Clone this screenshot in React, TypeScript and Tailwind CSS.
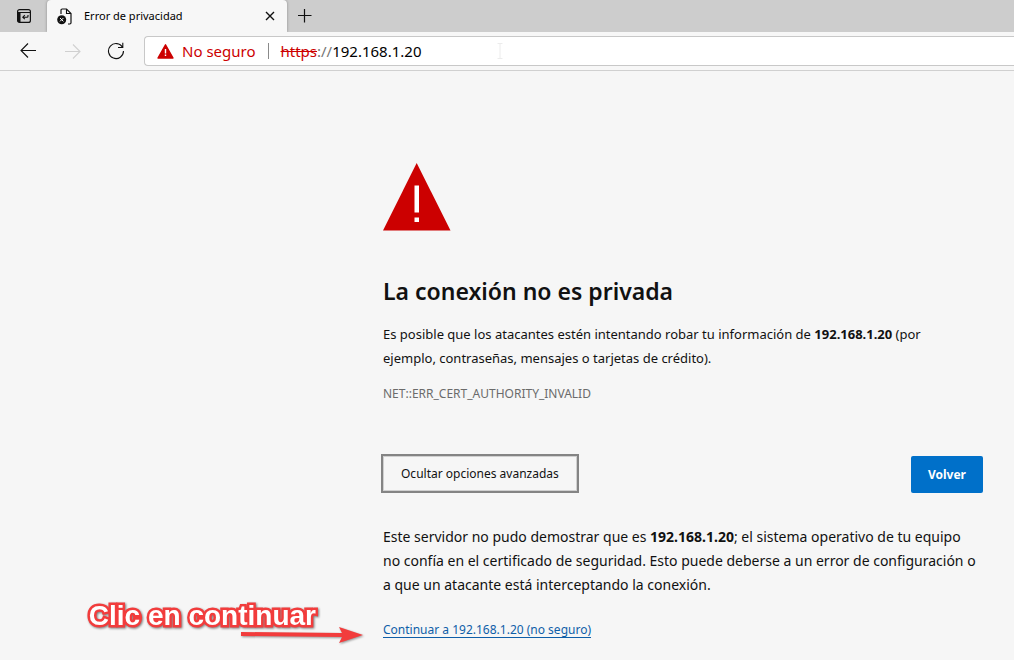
import React from "react";

const TabActionsIcon = () => (
    <svg width="16" height="16" viewBox="0 0 16 16" fill="none" aria-hidden="true">
        <rect x="1.6" y="1.6" width="12.8" height="12.8" rx="2" stroke="#111" strokeWidth="1.2" />
        <path d="M1.5 4.5h3v10h-1a2 2 0 0 1-2-2z" fill="#111" />
        <path d="M1.5 4.500h13" stroke="#111" strokeWidth="1" />
        <path d="M12 7v1.2a1 1 0 0 1-1 1H7M8.8 7.2l-2 2 2 2" stroke="#111" strokeWidth="1.1" />
    </svg>
);

const BrokenPageIcon = () => (
    <svg width="16" height="17" viewBox="0 0 16 17" fill="none" aria-hidden="true">
        <path d="M4 6V2.2A1.2 1.2 0 0 1 5.2 1h4.3L14 5.5v9.3a1.2 1.2 0 0 1-1.2 1.2H11" stroke="#111" strokeWidth="1.2" />
        <path d="M9.5 1v4.5H14" stroke="#111" strokeWidth="1.1" />
        <circle cx="4.7" cy="11.7" r="4.5" fill="#111" />
        <path d="M3 10l3.4 3.4M6.4 10L3 13.4" stroke="#fff" strokeWidth="1" />
    </svg>
);

const CloseIcon = () => (
    <svg width="10" height="10" viewBox="0 0 10 10" aria-hidden="true">
        <path d="M1 1l8 8M9 1L1 9" stroke="#111" strokeWidth="1.4" />
    </svg>
);

const PlusIcon = () => (
    <svg width="14" height="14" viewBox="0 0 14 14" aria-hidden="true">
        <path d="M6.5 0v13.5M0 6.5h13.5" stroke="#111" strokeWidth="1.2" />
    </svg>
);

const ArrowIcon = ({ className }: { className?: string }) => (
    <svg className={className} width="17" height="16" viewBox="0 0 17 16" fill="none" aria-hidden="true">
        <path d="M16 7.5H1M8 .5l-7 7 7 7" stroke="currentColor" strokeWidth="1.1" />
    </svg>
);

const ReloadIcon = () => (
    <svg width="18" height="18" viewBox="0 0 18 18" fill="none" aria-hidden="true">
        <path d="M15.6 5.5A7.5 7.5 0 1 0 16.5 9M15.8 .8v4.7H11" stroke="#111" strokeWidth="1.1" />
    </svg>
);

const AlertIcon = () => (
    <svg width="17" height="15" viewBox="0 0 17 15" aria-hidden="true">
        <path d="M8.5 .8L16 14H1z" fill="#c00" stroke="#c00" strokeWidth="1.4" strokeLinejoin="round" />
        <path d="M7.8 5h1.4v4.5H7.8zM7.8 10.6h1.4v1.5H7.8z" fill="#fff" />
    </svg>
);

const WarningTriangle = () => (
    <svg width="68" height="68" viewBox="0 0 68 68" role="img" aria-label="Advertencia">
        <path d="M33.7 0l33.8 67.5H0z" fill="#c00" />
        <path d="M31.5 22.5H36v27h-4.5zM31.5 54.5H36V59h-4.5z" fill="#fff" />
    </svg>
);

const BrowserBar = () => (
    <header>
        {/* Pestañas */}
        <div className="flex h-8 bg-[#cdcdcd]">
            <div className="flex w-[47px] items-center justify-center">
                <button type="button" aria-label="Menú de pestañas">
                    <TabActionsIcon />
                </button>
            </div>
            <div className="flex w-60 items-center rounded-t-sm bg-[#f7f7f7] pl-2.5 pr-3 shadow-[0_0_3px_rgba(0,0,0,0.35)]">
                <BrokenPageIcon />
                <span className="ml-[11px] flex-1 text-[11px] text-black">Error de privacidad</span>
                <button type="button" aria-label="Cerrar pestaña">
                    <CloseIcon />
                </button>
            </div>
            <button type="button" aria-label="Nueva pestaña" className="ml-[11px]">
                <PlusIcon />
            </button>
        </div>

        {/* Barra de direcciones */}
        <div className="relative flex h-[39px] items-center border-b border-[#d0d0d0] bg-[#f7f7f7] pl-5">
            <button type="button" aria-label="Atrás" className="text-[#111]">
                <ArrowIcon />
            </button>
            <button type="button" aria-label="Adelante" disabled className="ml-[27px] text-[#d0d0d0]">
                <ArrowIcon className="rotate-180" />
            </button>
            <button type="button" aria-label="Actualizar" className="ml-[26px]">
                <ReloadIcon />
            </button>
            <div className="ml-[19px] flex h-[30px] flex-1 items-center rounded-l-sm border border-r-0 border-[#c8c8c8] bg-white pl-3 text-[15px]">
                <AlertIcon />
                <span className="ml-2 text-[#c00]">No seguro</span>
                <span className="ml-3 mr-3 h-4 w-px bg-[#8a8a8a]" />
                <label htmlFor="url" className="text-[#767676]">
                    <span className="text-[#c00] line-through">https</span>://
                </label>
                <input id="url" type="text" defaultValue="192.168.1.20" className="w-[165px] text-black outline-none" />
                <svg width="6" height="16" viewBox="0 0 6 16" aria-hidden="true">
                    <path d="M.5 .5h5M3 .5v15M.5 15.5h5" stroke="#ececec" fill="none" />
                </svg>
            </div>
        </div>
    </header>
);

const App = () => {
    return (
        <div className="flex min-h-screen flex-col overflow-x-hidden bg-[#f6f6f6] font-['Noto_Sans','Open_Sans',sans-serif]">
            <BrowserBar />

            <main className="pl-[383px] pr-[31px] pt-[92px] text-[#111]">
                <WarningTriangle />
                <h1 className="mt-11 text-[23px] font-semibold leading-8">La conexión no es privada</h1>
                <p className="mt-[15px] text-[13px] leading-6">
                    Es posible que los atacantes estén intentando robar tu información de <strong>192.168.1.20</strong> (por
                    <br />
                    ejemplo, contraseñas, mensajes o tarjetas de crédito).
                </p>
                <p className="mt-3 text-[12px] leading-6 text-[#6b6b6b]">NET::ERR_CERT_AUTHORITY_INVALID</p>

                <div className="mt-12 flex items-end justify-between">
                    <button
                        type="button"
                        className="-ml-0.5 h-[39px] border-2 border-[#848484] px-[18px] text-[12px] shadow-[inset_0_0_0_1px_#d0d0d0]"
                    >
                        Ocultar opciones avanzadas
                    </button>
                    <button type="button" className="h-[37px] rounded-xs bg-[#0070c9] px-[17px] text-[12px] font-bold text-white">
                        Volver
                    </button>
                </div>

                <p className="mt-8 text-[14px] leading-6">
                    Este servidor no pudo demostrar que es <strong>192.168.1.20</strong>; el sistema operativo de tu equipo
                    <br />
                    no confía en el certificado de seguridad. Esto puede deberse a un error de configuración o
                    <br />
                    a que un atacante está interceptando la conexión.
                </p>

                <div className="relative mt-[21px] text-[12px] leading-6">
                    <a href="#continuar" className="text-[#0f5ea8] underline underline-offset-3">
                        Continuar a 192.168.1.20 (no seguro)
                    </a>
                    {/* Indicación sobre la página */}
                    <div className="absolute right-full top-0 -mt-[18px] mr-[67px] whitespace-nowrap font-['Liberation_Sans',sans-serif] text-[28px] font-bold leading-8 text-white drop-shadow-[1px_1px_1px_rgba(0,0,0,0.5)] [-webkit-text-stroke:5px_#f23c3c] [paint-order:stroke_fill]">
                        Clic en continuar
                    </div>
                    <svg
                        className="absolute right-full top-2 mr-5 drop-shadow-[1px_1px_1px_rgba(0,0,0,0.4)]"
                        width="122"
                        height="18"
                        viewBox="0 0 122 18"
                        aria-hidden="true"
                    >
                        <path d="M0 6l101 1-3-6 24 8-24 8 3-6L0 10z" fill="#f23c3c" />
                    </svg>
                </div>
            </main>
        </div>
    );
};

export default App;
